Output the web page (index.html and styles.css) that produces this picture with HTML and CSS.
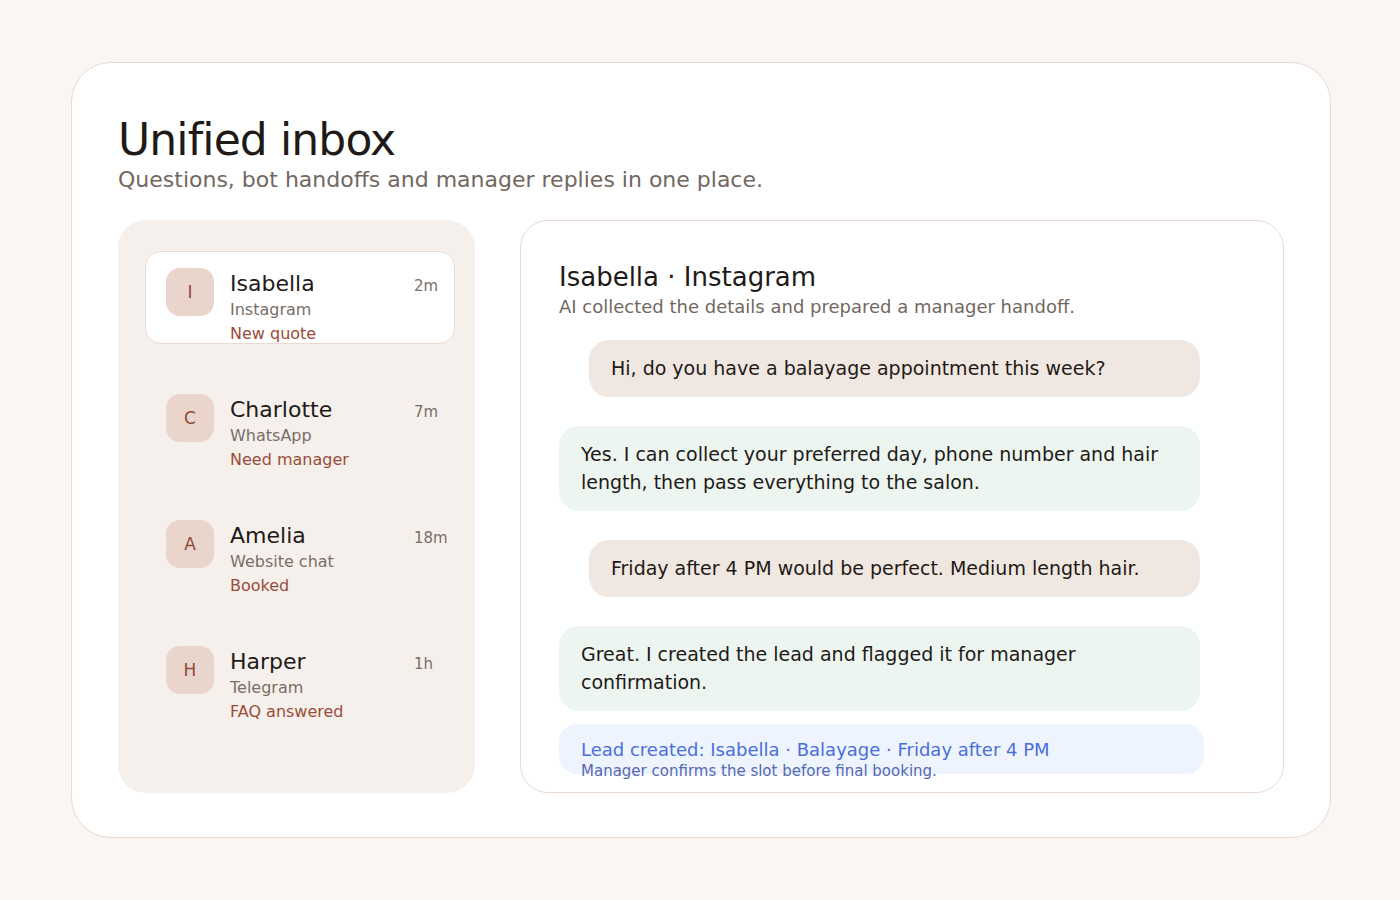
FILE: index.html
```html
<!DOCTYPE html>
<html lang="en">
<head>
    <meta charset="UTF-8">
    <meta name="viewport" content="width=device-width, initial-scale=1.0">
    <title>Unified inbox</title>
    <link rel="stylesheet" href="styles.css">
</head>
<body>
    <div class="card">
        <h1>Unified inbox</h1>
        <p class="lead">Questions, bot handoffs and manager replies in one place.</p>

        <div class="inbox">
            <div class="threads">
                <div class="thread active">
                    <div class="avatar">I</div>
                    <div class="thread-info">
                        <div class="thread-name">Isabella</div>
                        <div class="thread-channel">Instagram</div>
                        <div class="thread-status">New quote</div>
                    </div>
                    <div class="thread-time">2m</div>
                </div>

                <div class="thread">
                    <div class="avatar">C</div>
                    <div class="thread-info">
                        <div class="thread-name">Charlotte</div>
                        <div class="thread-channel">WhatsApp</div>
                        <div class="thread-status">Need manager</div>
                    </div>
                    <div class="thread-time">7m</div>
                </div>

                <div class="thread">
                    <div class="avatar">A</div>
                    <div class="thread-info">
                        <div class="thread-name">Amelia</div>
                        <div class="thread-channel">Website chat</div>
                        <div class="thread-status">Booked</div>
                    </div>
                    <div class="thread-time">18m</div>
                </div>

                <div class="thread">
                    <div class="avatar">H</div>
                    <div class="thread-info">
                        <div class="thread-name">Harper</div>
                        <div class="thread-channel">Telegram</div>
                        <div class="thread-status">FAQ answered</div>
                    </div>
                    <div class="thread-time">1h</div>
                </div>
            </div>

            <div class="chat">
                <h2>Isabella · Instagram</h2>
                <p class="chat-sub">AI collected the details and prepared a manager handoff.</p>

                <div class="messages">
                    <div class="msg customer">Hi, do you have a balayage appointment this week?</div>
                    <div class="msg bot">Yes. I can collect your preferred day, phone number and hair length, then pass everything to the salon.</div>
                    <div class="msg customer">Friday after 4 PM would be perfect. Medium length hair.</div>
                    <div class="msg bot">Great. I created the lead and flagged it for manager confirmation.</div>
                    <div class="note">
                        <div class="note-title">Lead created: Isabella · Balayage · Friday after 4 PM</div>
                        <div class="note-sub">Manager confirms the slot before final booking.</div>
                    </div>
                </div>
            </div>
        </div>
    </div>
</body>
</html>
```

FILE: styles.css
```css
* {
    margin: 0;
    padding: 0;
    box-sizing: border-box;
    font-family: "DejaVu Sans", sans-serif;
}

body {
    background-color: #faf6f3;
    padding: 62px 69px 62px 71px;
    color: #1f1a18;
}

.card {
    background-color: white;
    border: 1px solid #ead9cf;
    border-radius: 40px;
    height: 776px;
    padding: 52px 46px 44px;
    display: flex;
    flex-direction: column;
}

h1 {
    font-size: 44px;
    font-weight: normal;
    line-height: 1.15;
    letter-spacing: -0.02em;
    color: #1f1a18;
}

.lead {
    font-size: 22px;
    line-height: 28px;
    color: #72675f;
}

.inbox {
    flex: 1;
    display: grid;
    grid-template-columns: 357px 1fr;
    gap: 45px;
    margin-top: 26px;
}

/* thread list */
.threads {
    background-color: #f5f0ec;
    border-radius: 28px;
    padding: 31px 20px 0 27px;
    display: flex;
    flex-direction: column;
    gap: 33px;
}

.thread {
    display: grid;
    grid-template-columns: 48px 1fr 20px;
    column-gap: 16px;
    align-items: start;
    height: 93px;
    padding: 16px 20px 0;
    border: 1px solid transparent;
    border-radius: 16px;
}

.thread.active {
    background-color: white;
    border-color: #ead9cf;
}

.avatar {
    width: 48px;
    height: 48px;
    border-radius: 14px;
    background-color: #ead5cc;
    color: #8f4a3a;
    font-size: 17px;
    display: flex;
    align-items: center;
    justify-content: center;
}

.thread-info {
    padding-top: 1px;
}

.thread-name {
    font-size: 22px;
    line-height: 30px;
    color: #1f1a18;
}

.thread-channel {
    font-size: 16px;
    line-height: 22px;
    color: #7a6e67;
}

.thread-status {
    font-size: 16px;
    line-height: 24px;
    margin-top: 1px;
    color: #9a4c3a;
}

.thread-time {
    font-size: 15px;
    line-height: 24px;
    padding-top: 6px;
    color: #7a6e67;
    white-space: nowrap;
}

/* conversation */
.chat {
    border: 1px solid #ead9cf;
    border-radius: 28px;
    padding: 41px 38px 0;
}

h2 {
    font-size: 26px;
    font-weight: normal;
    line-height: 1.2;
    color: #1f1a18;
}

.chat-sub {
    font-size: 18px;
    line-height: 24px;
    margin-top: 2px;
    color: #72675f;
}

.messages {
    display: flex;
    flex-direction: column;
    align-items: flex-start;
    margin-top: 21px;
}

.msg {
    font-size: 19px;
    line-height: 28px;
    padding: 14px 22px 15px;
    border-radius: 20px;
    width: 641px;
    margin-bottom: 29px;
    color: #1f1a18;
}

.msg.customer {
    width: 611px;
    margin-left: 30px;
    background-color: #f1e7e1;
}

.msg.bot {
    background-color: #ecf5f0;
}

.msg:nth-child(4) {
    margin-bottom: 13px;
}

.note {
    width: 645px;
    height: 50px;
    padding: 14px 22px 0;
    border-radius: 18px;
    background-color: #eef4fe;
}

.note-title {
    font-size: 18px;
    line-height: 24px;
    color: #4a6edb;
}

.note-sub {
    font-size: 15px;
    line-height: 18px;
    color: #5468b3;
}
```
